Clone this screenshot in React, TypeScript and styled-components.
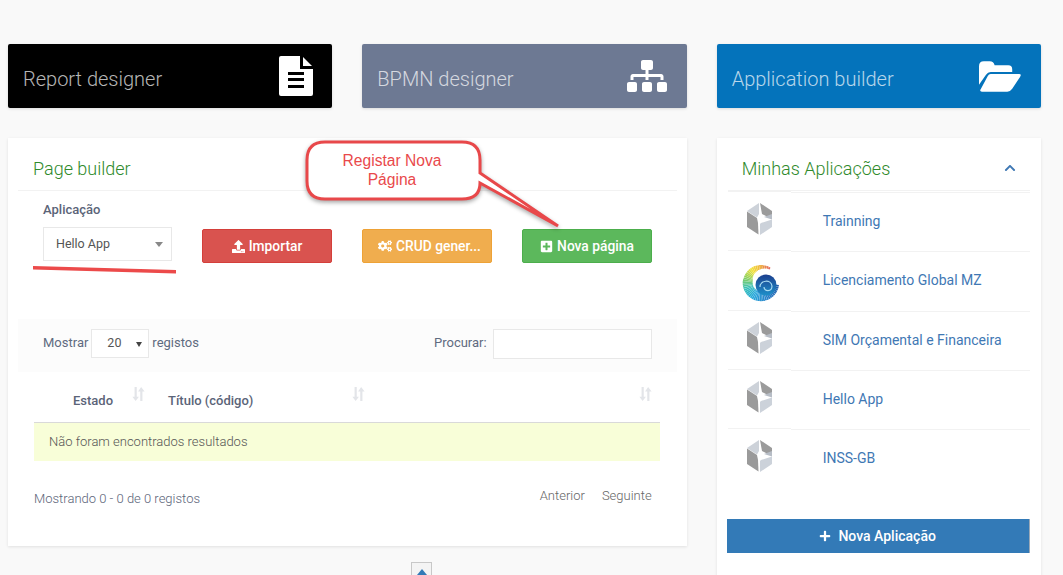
import React from 'react';
import styled, { createGlobalStyle } from 'styled-components';
import { FaChevronUp, FaCogs, FaPlus, FaPlusSquare, FaSitemap, FaUpload } from 'react-icons/fa';

const GlobalStyle = createGlobalStyle`
  html, body {
    margin: 0;
    height: 100%;
    overflow: hidden;
    background: #f9f9f9;
    font-family: Roboto, "Liberation Sans", sans-serif;
  }
`;

const Page = styled.div`
  position: relative;
  box-sizing: border-box;
  width: 1063px;
  height: 575px;
  padding: 44px 22px 0 8px;
  overflow: hidden;
`;

const Columns = styled.div`
  display: grid;
  grid-template-columns: repeat(3, minmax(0, 1fr));
  column-gap: 30px;
`;

const ShortcutRow = styled(Columns)`
  margin-bottom: 30px;
`;

const Shortcut = styled.a<{ $bg: string }>`
  display: flex;
  align-items: center;
  justify-content: space-between;
  height: 64px;
  padding: 0 20px 0 15px;
  border-radius: 2px;
  background: ${(p) => p.$bg};
  color: rgba(255, 255, 255, 0.72);
  font-size: 20px;
  font-weight: 300;
  box-shadow: 0 1px 3px rgba(0, 0, 0, 0.12);
  span {
    margin-top: 6px;
  }
  svg {
    color: #fff;
    flex: none;
  }
`;

const Panel = styled.section`
  background: #fff;
  box-shadow: 0 1px 3px rgba(0, 0, 0, 0.1);
  padding: 0 11px;
`;

const BuilderPanel = styled(Panel)`
  grid-column: span 2;
  height: 408px;
  padding: 0 10px;
  position: relative;
`;

const AppsPanel = styled(Panel)`
  height: 470px;
`;

const PanelHead = styled.header`
  display: flex;
  align-items: center;
  justify-content: space-between;
  height: 53px;
  padding: 8px 14px 0 15px;
  box-sizing: border-box;
  border-bottom: 1px solid #f2f2f2;
  font-size: 18px;
  font-weight: 300;
  color: #2f8a2c;
  svg {
    color: #3f78b4;
  }
`;

const AppsHead = styled(PanelHead)`
  padding-left: 14px;
`;

const FormRow = styled.div`
  display: grid;
  grid-template-columns: 129px repeat(3, 130px);
  column-gap: 30px;
  padding: 11px 0 0 25px;
  height: 128px;
  box-sizing: border-box;
`;

const Field = styled.div`
  display: flex;
  flex-direction: column;
`;

const FieldLabel = styled.label`
  font-size: 13px;
  font-weight: 500;
  line-height: 15px;
  margin-bottom: 10px;
  color: #5b6478;
`;

const SelectBox = styled.div<{ $dark?: boolean }>`
  position: relative;
  &::after {
    content: '';
    position: absolute;
    top: 50%;
    right: ${(p) => (p.$dark ? '7px' : '9px')};
    margin-top: -2px;
    border-style: solid;
    border-width: ${(p) => (p.$dark ? '5px 3px 0' : '5px 4px 0')};
    border-color: ${(p) => (p.$dark ? '#444' : '#888')} transparent transparent;
    pointer-events: none;
  }
`;

const Select = styled.select`
  appearance: none;
  display: block;
  box-sizing: border-box;
  width: 100%;
  height: 34px;
  padding: 0 0 2px 12px;
  border: 1px solid #e8e8e8;
  border-radius: 0;
  background: #fff;
  color: #555;
  font: 400 12.5px Roboto, sans-serif;
`;

const SmallSelect = styled(Select)`
  width: 58px;
  height: 29px;
  padding-left: 15px;
`;

const ActionSlot = styled.div`
  display: flex;
  align-items: flex-start;
  padding-top: 27px;
`;

const ActionButton = styled.button<{ $bg: string; $border: string; $inset?: number }>`
  flex: 1;
  display: flex;
  align-items: center;
  justify-content: center;
  gap: 4px;
  height: 34px;
  padding: 0 0 0 ${(p) => p.$inset ?? 0}px;
  border: 1px solid ${(p) => p.$border};
  border-radius: 2px;
  background: ${(p) => p.$bg};
  color: #fff;
  font: 500 13.8px Roboto, sans-serif;
  white-space: nowrap;
`;

const ToolStrip = styled.div`
  display: flex;
  align-items: flex-start;
  justify-content: space-between;
  box-sizing: border-box;
  height: 53px;
  padding: 10px 25px 0 25px;
  background: #fcfcfc;
  font-size: 13px;
  line-height: 28px;
  color: #5f6b80;
`;

const StripGroup = styled.div`
  display: flex;
  align-items: flex-start;
  gap: 3px;
`;

const SearchInput = styled.input`
  box-sizing: border-box;
  width: 159px;
  height: 30px;
  margin-left: 3px;
  border: 1px solid #e8e8e8;
  background: #fff;
`;

const TableBlock = styled.div`
  margin: 0 17px 0 16px;
`;

const TableHead = styled.div`
  display: grid;
  grid-template-columns: 111px 220px 1fr;
  height: 51px;
  border-bottom: 1px solid #d9d9d9;
  box-sizing: border-box;
  font-size: 13px;
  font-weight: 500;
  color: #5b6478;
`;

const HeadCell = styled.div`
  position: relative;
  display: flex;
  align-items: flex-end;
  padding: 0 0 14px 39px;
  &:nth-child(2) {
    padding-left: 23px;
  }
  &:last-child {
    margin-right: 8px;
  }
`;

const SortMark = styled.svg`
  position: absolute;
  top: 15px;
  right: 0;
  width: 13px;
  height: 14px;
  color: #e3e5e9;
`;

const EmptyRow = styled.div`
  display: flex;
  align-items: center;
  box-sizing: border-box;
  height: 38px;
  padding: 0 0 1px 15px;
  background: #f8fed8;
  font-size: 13px;
  font-weight: 300;
  color: #555;
`;

const TableFoot = styled.div`
  display: flex;
  justify-content: space-between;
  padding: 27px 8px 0 0;
  font-size: 13px;
  font-weight: 300;
  color: #5b6478;
  line-height: 22px;
`;

const Pager = styled.div`
  display: flex;
  gap: 17px;
  margin-top: -3px;
  color: #666;
`;

const AppList = styled.ul`
  list-style: none;
  margin: 1px 0 0;
  padding: 0;
`;

const AppRow = styled.li`
  display: grid;
  grid-template-columns: 63px 1fr;
  height: 59.3px;
`;

const LogoCell = styled.div`
  display: flex;
  justify-content: flex-start;
  padding: 11px 0 0 19px;
  margin-top: -1px;
  border-top: 1px solid #f2f2f2;
`;

const AppName = styled.a`
  display: flex;
  padding: 20px 0 0 32px;
  border-top: 1px solid #f2f2f2;
  font-size: 14px;
  line-height: 16px;
  color: #3f78b4;
`;

const WideButton = styled.button`
  display: flex;
  align-items: center;
  justify-content: center;
  gap: 7px;
  box-sizing: border-box;
  width: 303px;
  height: 34px;
  margin: 31px 0 0 -1px;
  border: 0;
  border-right: 1px solid #9aa9b8;
  background: #337ab7;
  color: #fff;
  font: 500 14px Roboto, sans-serif;
`;

const FileMark = styled.svg`
  margin-right: -1px;
`;

const SwirlMark = styled.svg`
  flex: none;
  margin: -1px 0 0 -5px;
`;

const Callout = styled.svg`
  position: absolute;
  left: 292px;
  top: -2px;
  width: 265px;
  height: 96px;
  overflow: visible;
  filter: drop-shadow(0 2px 2px rgba(0, 0, 0, 0.35));
`;

const CalloutText = styled.div`
  position: absolute;
  left: 299px;
  top: 13px;
  width: 170px;
  text-align: center;
  font: 400 15.6px/19px "Liberation Sans", Arial, sans-serif;
  color: #e9494b;
`;

const Underline = styled.svg`
  position: absolute;
  left: 25px;
  top: 128px;
  width: 144px;
  height: 8px;
`;

const TopButton = styled.div`
  position: absolute;
  left: 411px;
  top: 562px;
  box-sizing: border-box;
  width: 21px;
  height: 30px;
  padding-top: 6px;
  border: 1px solid #c8c8c8;
  background: #f4f4f4;
  display: flex;
  justify-content: center;
  &::before {
    content: '';
    border-style: solid;
    border-width: 0 5px 6px;
    height: 0;
    border-color: transparent transparent #337ab7;
  }
`;

const FileIcon = () => (
  <FileMark width="34" height="40" viewBox="0 0 34 40">
    <path d="M2 0H21V13H34V38Q34 40 32 40H2Q0 40 0 38V2Q0 0 2 0Z" fill="#fff" />
    <path d="M24 1L33 10H24Z" fill="#fff" />
    <path d="M9 16H25V19H9ZM9 22H25V25H9ZM9 29H25V32H9Z" fill="#000" />
  </FileMark>
);

const FolderIcon = () => (
  <svg width="42" height="31" viewBox="0 0 43 31">
    <path d="M0 5Q0 0 5 0H11Q15 0 16 4H30Q34 4 34 8V11H12Q9 11 7 14L0 24Z" fill="#fff" />
    <path d="M12 13H41Q44 13 42 16L34 28Q32 31 29 31H3Q0 31 2 28L9 15Q10 13 12 13Z" fill="#fff" />
  </svg>
);

const SortIcon = () => (
  <SortMark viewBox="0 0 14 16">
    <path d="M2.5 0H5V11H7.5L3.7 16L0 11H2.5ZM10 0L14 5H11.5V16H9V5H6.5Z" fill="currentColor" />
  </SortMark>
);

const CubeLogo = () => (
  <svg width="25" height="32" viewBox="0 0 25 32">
    <path d="M12 0L0 8L10 14.5L12 11Z" fill="#cdd2d9" />
    <path d="M13 0L25 8V16L15 11Z" fill="#9b9b9b" />
    <path d="M25 11V16.5L17 14Z" fill="#b7bdc6" />
    <path d="M0 8.5L10 15L11 20L11.5 31.5L0 24Z" fill="#9a9a9a" />
    <path d="M13 32L25 24V16.5L14 20L13 21Z" fill="#ccd2da" />
  </svg>
);

const swirlStops: [number, number[]][] = [
  [0, [226, 104, 90]],
  [0.12, [240, 184, 60]],
  [0.22, [242, 226, 60]],
  [0.34, [140, 207, 90]],
  [0.48, [53, 192, 184]],
  [0.62, [42, 168, 220]],
  [0.8, [43, 128, 200]],
  [1, [29, 90, 168]],
];

const swirlColor = (t: number) => {
  const i = swirlStops.findIndex(([s]) => s >= t);
  if (i <= 0) return `rgb(${swirlStops[0][1].join(',')})`;
  const [s0, c0] = swirlStops[i - 1];
  const [s1, c1] = swirlStops[i];
  const k = (t - s0) / (s1 - s0);
  return `rgb(${c0.map((v, n) => Math.round(v + (c1[n] - v) * k)).join(',')})`;
};

// the rainbow band of the logo, cut in thin slices so it keeps the fine ribs
const swirlSlices = Array.from({ length: 46 }, (_, n) => {
  const t = n / 45;
  const from = ((58 + t * 290) * Math.PI) / 180;
  const to = ((58 + (t + 0.0205) * 290) * Math.PI) / 180;
  const r = 17 - Math.min(t * 10, 3.5) - t * 0.5;
  const cx = 19;
  const cy = 22;
  return {
    d: `M${cx + r * Math.cos(from)} ${cy - r * Math.sin(from)}A${r} ${r} 0 0 0 ${cx + r * Math.cos(to)} ${cy - r * Math.sin(to)}`,
    stroke: swirlColor(t),
    width: 2 + Math.min(t * 2.6, 1) * 8,
  };
});

const SwirlLogo = () => (
  <SwirlMark width="37" height="41" viewBox="0 0 37 41">
    <defs>
      <linearGradient id="swirlCore" x1="0" y1="0" x2="0" y2="1">
        <stop offset="0" stopColor="#1c3f8e" />
        <stop offset="1" stopColor="#1e8fc9" />
      </linearGradient>
    </defs>
    {swirlSlices.map((s) => (
      <path key={s.d} d={s.d} fill="none" stroke={s.stroke} strokeWidth={s.width} />
    ))}
    <circle cx="24" cy="24" r="10.5" fill="url(#swirlCore)" />
    <path d="M18 26C18 19 29 18 30 25C30 31 22 31 22 26" fill="none" stroke="#a9dcf2" strokeWidth="1.2" />
  </SwirlMark>
);

const apps = [
  { name: 'Trainning', logo: <CubeLogo /> },
  { name: 'Licenciamento Global MZ', logo: <SwirlLogo /> },
  { name: 'SIM Orçamental e Financeira', logo: <CubeLogo /> },
  { name: 'Hello App', logo: <CubeLogo /> },
  { name: 'INSS-GB', logo: <CubeLogo /> },
];

const App = () => {
  return (
    <Page>
      <GlobalStyle />
      <ShortcutRow>
        <Shortcut $bg="#000">
          <span>Report designer</span>
          <FileIcon />
        </Shortcut>
        <Shortcut $bg="#6d7993">
          <span>BPMN designer</span>
          <FaSitemap size={40} />
        </Shortcut>
        <Shortcut $bg="#0473bb">
          <span>Application builder</span>
          <FolderIcon />
        </Shortcut>
      </ShortcutRow>
      <Columns>
        <BuilderPanel>
          <PanelHead>Page builder</PanelHead>
          <FormRow>
            <Field>
              <FieldLabel>Aplicação</FieldLabel>
              <SelectBox>
                <Select defaultValue="Hello App">
                  <option>Hello App</option>
                </Select>
              </SelectBox>
            </Field>
            <ActionSlot>
              <ActionButton $bg="#d9534f" $border="#d43f3a">
                <FaUpload size={13} /> Importar
              </ActionButton>
            </ActionSlot>
            <ActionSlot>
              <ActionButton $bg="#f0ad4e" $border="#eea236" $inset={5}>
                <FaCogs size={14} /> CRUD gener...
              </ActionButton>
            </ActionSlot>
            <ActionSlot>
              <ActionButton $bg="#5cb85c" $border="#4cae4c">
                <FaPlusSquare size={13} /> Nova página
              </ActionButton>
            </ActionSlot>
          </FormRow>
          <ToolStrip>
            <StripGroup>
              Mostrar
              <SelectBox $dark>
                <SmallSelect defaultValue="20">
                  <option>20</option>
                </SmallSelect>
              </SelectBox>
              registos
            </StripGroup>
            <StripGroup>
              Procurar:
              <SearchInput />
            </StripGroup>
          </ToolStrip>
          <TableBlock>
            <TableHead>
              <HeadCell>
                Estado
                <SortIcon />
              </HeadCell>
              <HeadCell>
                Título (código)
                <SortIcon />
              </HeadCell>
              <HeadCell>
                <SortIcon />
              </HeadCell>
            </TableHead>
            <EmptyRow>Não foram encontrados resultados</EmptyRow>
            <TableFoot>
              Mostrando 0 - 0 de 0 registos
              <Pager>
                <span>Anterior</span>
                <span>Seguinte</span>
              </Pager>
            </TableFoot>
          </TableBlock>
          <Underline viewBox="0 0 144 8">
            <path d="M0 0L143 4V7.5L0 3.5Z" fill="#ec4a4a" />
          </Underline>
          <Callout viewBox="300 136 265 96">
            <path
              d="M325 142H462Q480 142 480 160V173L558 226L480 183Q480 199 462 199H325Q307 199 307 181V160Q307 142 325 142Z"
              fill="#fff"
              stroke="#e8484a"
              strokeWidth="3"
            />
          </Callout>
          <CalloutText>
            Registar Nova
            <br />
            Página
          </CalloutText>
        </BuilderPanel>
        <AppsPanel>
          <AppsHead>
            Minhas Aplicações
            <FaChevronUp size={12} />
          </AppsHead>
          <AppList>
            {apps.map((app) => (
              <AppRow key={app.name}>
                <LogoCell>{app.logo}</LogoCell>
                <AppName>{app.name}</AppName>
              </AppRow>
            ))}
          </AppList>
          <WideButton>
            <FaPlus size={12} /> Nova Aplicação
          </WideButton>
        </AppsPanel>
      </Columns>
      <TopButton />
    </Page>
  );
};

export default App;
